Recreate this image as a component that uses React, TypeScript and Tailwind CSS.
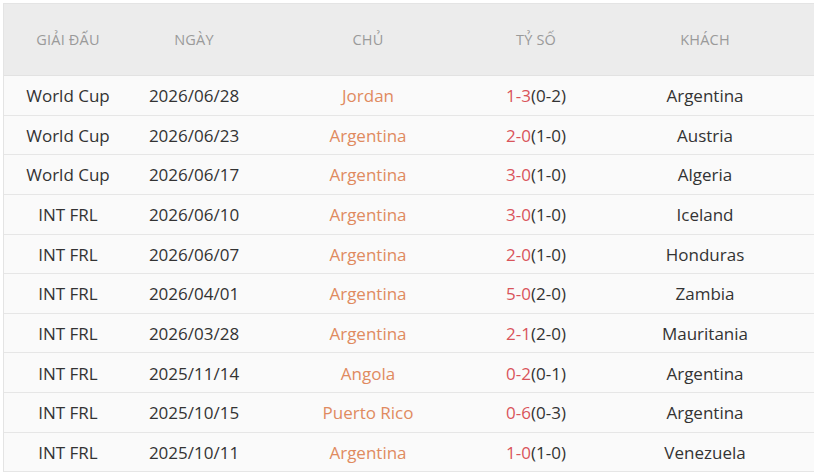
import React from "react";

const rows = [
  ["World Cup", "2026/06/28", "Jordan", "1-3", "(0-2)", "Argentina"],
  ["World Cup", "2026/06/23", "Argentina", "2-0", "(1-0)", "Austria"],
  ["World Cup", "2026/06/17", "Argentina", "3-0", "(1-0)", "Algeria"],
  ["INT FRL", "2026/06/10", "Argentina", "3-0", "(1-0)", "Iceland"],
  ["INT FRL", "2026/06/07", "Argentina", "2-0", "(1-0)", "Honduras"],
  ["INT FRL", "2026/04/01", "Argentina", "5-0", "(2-0)", "Zambia"],
  ["INT FRL", "2026/03/28", "Argentina", "2-1", "(2-0)", "Mauritania"],
  ["INT FRL", "2025/11/14", "Angola", "0-2", "(0-1)", "Argentina"],
  ["INT FRL", "2025/10/15", "Puerto Rico", "0-6", "(0-3)", "Argentina"],
  ["INT FRL", "2025/10/11", "Argentina", "1-0", "(1-0)", "Venezuela"],
];

export default function App() {
  return (
    <div
      className="w-[814px] h-[475px] bg-white overflow-hidden pt-[3px] pl-[3px]"
      style={{ fontFamily: '"Open Sans", "Noto Sans", sans-serif' }}
    >
      <div className="border-l border-t border-[#e4e4e4] w-[820px]">
        <div className="flex h-[72px] items-center bg-[#ececec] border-b border-[#e2e2e2] text-[14.5px] text-[#9a9a9a] tracking-[0.2px]">
          <div className="w-[128px] text-center">GIẢI ĐẤU</div>
          <div className="w-[124px] text-center">NGÀY</div>
          <div className="w-[224px] text-center">CHỦ</div>
          <div className="w-[112px] text-center">TỶ SỐ</div>
          <div className="w-[226px] text-center">KHÁCH</div>
        </div>
        {rows.map((r, i) => (
          <div
            key={i}
            className="flex h-[39.65px] items-center bg-[#fafafa] border-b border-[#e6e6e6] text-[17px] text-[#333] pt-[1px]"
          >
            <div className="w-[128px] text-center">{r[0]}</div>
            <div className="w-[124px] text-center">{r[1]}</div>
            <div className="w-[224px] text-center text-[#e08a5f]">{r[2]}</div>
            <div className="w-[112px] text-center">
              <span className="text-[#d9545a]">{r[3]}</span>
              <span>{r[4]}</span>
            </div>
            <div className="w-[226px] text-center">{r[5]}</div>
          </div>
        ))}
      </div>
    </div>
  );
}
